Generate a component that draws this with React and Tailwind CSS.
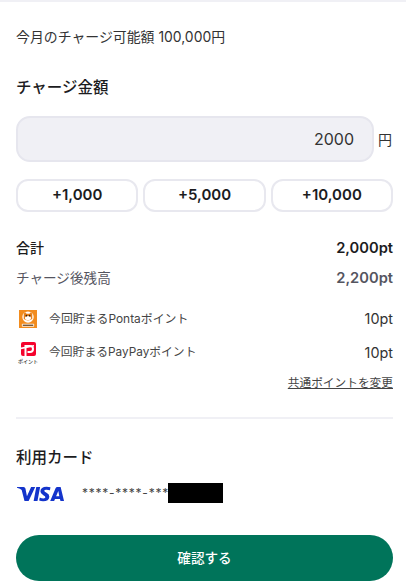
import React from "react";

function PontaIcon() {
  return (
    <svg width="18" height="18" viewBox="0 0 19 19" className="shrink-0">
      <rect width="19" height="19" fill="#f28c1e" />
      <circle cx="9.5" cy="7.5" r="6" fill="#fff" />
      <path d="M5 4 L6.5 2.5 L8 4 H11 L12.5 2.5 L14 4 V9.5 Q9.5 12.5 5 9.5 Z" fill="#e8811a" />
      <ellipse cx="9.5" cy="8.5" rx="3.2" ry="2.2" fill="#fff" />
      <circle cx="7.8" cy="6" r="0.9" fill="#3b2410" />
      <circle cx="11.2" cy="6" r="0.9" fill="#3b2410" />
      <rect x="3" y="14.6" width="13" height="3" rx="0.6" fill="#fff" opacity="0.85" />
      <rect x="4" y="15.5" width="11" height="1.2" fill="#5a3a1a" />
    </svg>
  );
}

function PayPayIcon() {
  return (
    <div className="w-[24px] h-[24px] pt-[1px] flex flex-col items-center shrink-0">
      <svg width="15" height="14" viewBox="0 0 15 14" className="shrink-0">
        <rect width="15" height="14" rx="2" fill="#f5032d" />
        <path d="M4.5 14 V4 H9 A3 3 0 0 1 9 10 H6.5" fill="none" stroke="#fff" strokeWidth="2" />
        <path d="M0 5.6 L13 3 V4.4 L0 7.2 Z" fill="#fff" />
      </svg>
      <span className="mt-[1px] text-[5px] leading-[8px] font-medium text-[#333] whitespace-nowrap">ポイント</span>
    </div>
  );
}

function VisaLogo() {
  return (
    <svg width="49" height="16" viewBox="0 0 50 17" className="shrink-0">
      <path
        fill="#1434cb"
        d="M0 1 H7 Q8.6 1 9 2.6 L10.6 11 L15 1 H19.4 L12.4 16 H8 L5 4.2 Q3.6 2.6 0 1.8 Z M20.5 1 H24.6 L21.8 16 H17.7 Z M35.6 1.4 L35 4.6 Q33 3.8 31 3.9 Q29 4 29 5.1 Q29 6 31.4 7.2 Q34.6 8.8 34.4 11.4 Q34 16.2 27.8 16.3 Q25.4 16.3 23.6 15.5 L24.2 12.2 Q26.2 13.2 28.2 13.2 Q30.2 13.1 30.2 11.9 Q30.2 11 28 9.8 Q24.8 8.2 24.9 5.6 Q25.2 0.9 31.4 0.8 Q33.8 0.8 35.6 1.4 Z M43 1 H46.4 L50 16 H46.2 L45.7 13.8 H40.4 L39.5 16 H35.3 L41 2.4 Q41.6 1 43 1 Z M41.6 10.8 H45 L43.9 5.4 Z"
      />
    </svg>
  );
}

export default function App() {
  return (
    <div className="w-[406px] h-[584px] overflow-hidden bg-white text-[#1c1c1e] font-['Inter','Noto_Sans_CJK_JP',sans-serif]">
      <div className="h-[2px] bg-[#f0f0f5]" />
      <div className="pl-4 pr-[13px]">
        <p className="mt-[26px] text-[13.9px] leading-[18px] text-[#333]">今月のチャージ可能額 100,000円</p>
        <h2 className="mt-[31px] text-[15.5px] leading-[22px] font-medium">チャージ金額</h2>

        <div className="mt-[17px] flex items-center gap-[4px]">
          <div className="flex-1 h-[46px] rounded-[14px] bg-[#f0f0f5] border-2 border-[#e6e6ee] flex items-center justify-end pr-[18px] text-[16px] text-[#333]">
            2000
          </div>
          <span className="w-[15px] text-[14px] text-[#333]">円</span>
        </div>

        <div className="mt-[17px] grid grid-cols-3 gap-[5px]">
          {["+1,000", "+5,000", "+10,000"].map((t) => (
            <button
              key={t}
              className="h-[33px] rounded-[12px] bg-white border-2 border-[#e8e8ef] text-[15px] font-semibold text-[#1c1c1e]"
            >
              {t}
            </button>
          ))}
        </div>

        <div className="mt-[27px] flex items-center justify-between h-[18px] text-[14px] font-medium">
          <span className="-mt-[2px]">合計</span>
          <span className="text-[14.7px] font-semibold">2,000pt</span>
        </div>
        <div className="mt-[12px] flex items-center justify-between h-[18px] text-[13.6px] text-[#55555f]">
          <span>チャージ後残高</span>
          <span className="text-[14.7px] font-semibold">2,200pt</span>
        </div>

        <div className="mt-[20px] flex items-center h-[24px] text-[#333]">
          <div className="w-[24px] flex justify-center"><PontaIcon /></div>
          <span className="ml-[9px] flex-1 text-[11.9px] text-[#444]">今回貯まるPontaポイント</span>
          <span className="text-[14.4px]">10pt</span>
        </div>
        <div className="mt-[10px] flex items-center h-[24px] text-[#333]">
          <PayPayIcon />
          <span className="ml-[9px] flex-1 text-[11.8px] text-[#444]">今回貯まるPayPayポイント</span>
          <span className="text-[14.4px]">10pt</span>
        </div>
        <div className="mt-[10px] flex justify-end">
          <a className="text-[11.7px] leading-[16px] underline text-[#444]">共通ポイントを変更</a>
        </div>

        <div className="mt-[26px] h-[2px] bg-[#f0f0f5]" />

        <h2 className="mt-[28px] text-[15.5px] leading-[22px] font-medium">利用カード</h2>
        <div className="mt-[14px] flex items-center">
          <div className="pt-[2px] shrink-0"><VisaLogo /></div>
          <span className="ml-[17px] w-[86px] text-[12px] text-[#444] tracking-[0.75px] whitespace-nowrap">****-****-***</span>
          <div className="w-[55px] h-[20px] bg-black" />
        </div>

        <button className="mt-[32px] w-full h-[46px] rounded-full bg-[#00745a] text-white text-[13.6px] font-medium">
          確認する
        </button>
      </div>
    </div>
  );
}
